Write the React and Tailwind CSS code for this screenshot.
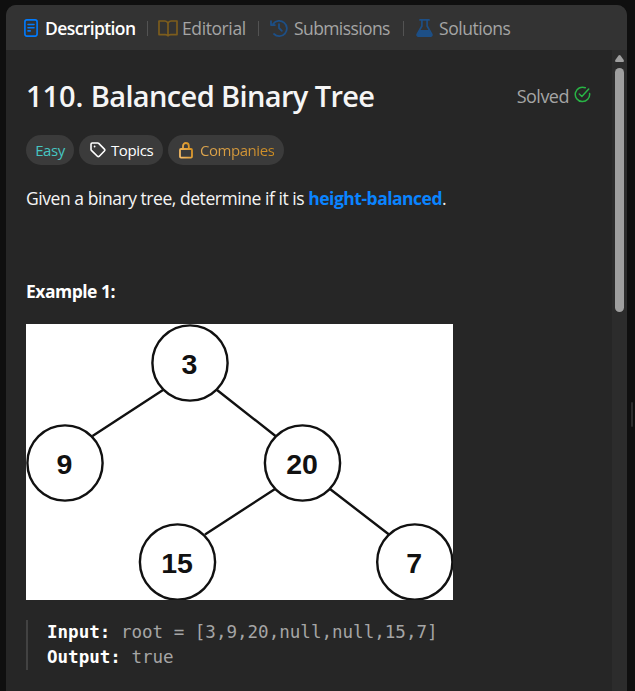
import React from "react";

const DocIcon = () => (
  <svg width="14" height="18" viewBox="0 0 14 18" fill="none" stroke="#007bff" strokeWidth="1.6" strokeLinecap="round">
    <rect x="0.9" y="0.9" width="12.2" height="16.2" rx="2" />
    <path d="M4 5.5h6M4 8.7h6M4 11.9h2.2" />
  </svg>
);

const BookIcon = () => (
  <svg width="20" height="17" viewBox="0 0 20 17" fill="none" stroke="#7d5d1d" strokeWidth="1.7" strokeLinejoin="round">
    <path d="M10 3.2C9.4 1.7 8.4 1 7 1H1v13.6h6.4c1.2 0 2 .4 2.6 1.3.6-.9 1.4-1.3 2.6-1.3H19V1h-6c-1.4 0-2.4.7-3 2.2zM10 3.2v12.3" />
  </svg>
);

const HistoryIcon = () => (
  <svg width="18" height="18" viewBox="0 0 18 18" fill="none" stroke="#1d4f86" strokeWidth="1.8" strokeLinecap="round" strokeLinejoin="round">
    <path d="M3.2 4.9A7.600 7.600 0 1 1 4 15M1 2.200v3.900h3.900M9 5.200V9l2.800 2.800" />
  </svg>
);

const FlaskIcon = () => (
  <svg width="17" height="18" viewBox="0 0 17 18" fill="none" stroke="#1d4f86" strokeWidth="1.7" strokeLinejoin="round">
    <path d="M4 .9h9M5.9 1v6L1.300 15.200c-.5 1 .1 1.900 1.200 1.900h12c1.100 0 1.700-.9 1.200-1.900L11.100 7V1" strokeLinecap="round" />
    <path d="M4 11h9l2.700 5-.8 1H2l-.8-1z" fill="#1d4f86" stroke="none" />
  </svg>
);

const CheckIcon = () => (
  <svg width="17" height="17" viewBox="0 0 17 17" fill="none" stroke="#28b445" strokeWidth="1.5" strokeLinecap="round" strokeLinejoin="round">
    <path d="M11.300 1.800A7.200 7.200 0 1 0 15.600 7.500M5.300 8l2.600 2.500L14.700 3" />
  </svg>
);

const TagIcon = () => (
  <svg width="16" height="16" viewBox="0 0 16 16" fill="none" stroke="#fff" strokeWidth="1.6" strokeLinejoin="round">
    <path d="M1 2.200C1 1.500 1.500 1 2.200 1h5.500c.4 0 .7.100 1 .4l5.700 5.700c.6.6.6 1.300 0 1.900L9.300 14.200c-.6.600-1.300.600-1.900 0L1.400 8.400c-.3-.3-.4-.6-.4-1z" />
    <circle cx="4.6" cy="4.5" r="0.9" fill="#fff" stroke="none" />
  </svg>
);

const LockIcon = () => (
  <svg width="14" height="17" viewBox="0 0 14 17" fill="none" stroke="url(#gold)" strokeWidth="1.8" strokeLinejoin="round">
    <defs>
      <linearGradient id="gold" gradientUnits="userSpaceOnUse" x1="0" y1="12" x2="14" y2="4">
        <stop stopColor="#f7bd67" />
        <stop offset="1" stopColor="#d18a16" />
      </linearGradient>
    </defs>
    <rect x="1" y="7" width="12" height="8.600" rx="1" />
    <path d="M4 7V4c0-1.900 1.200-3 2.900-3S9.800 2.100 9.800 4v3" />
  </svg>
);

const Divider = () => <div className="h-[15px] w-px shrink-0 bg-[#535353]" />;

const nodes = [
  { x: 164, y: 39, v: "3" },
  { x: 39, y: 139, v: "9" },
  { x: 276.5, y: 139, v: "20" },
  { x: 151.5, y: 238, v: "15" },
  { x: 388.8, y: 238, v: "7" },
];

const Tree = () => (
  <svg className="mt-[18px] block shrink-0 bg-white" width="427" height="276" viewBox="0 0 427 276">
    <g stroke="#111" strokeWidth="2.4" fill="none">
      <path d="M137 66L66.500 112M191 66l58.500 46M249 165l-70 45.500M304 165l59 45.500" />
      {nodes.map((n) => (
        <circle key={n.v} cx={n.x} cy={n.y} r="37.6" />
      ))}
    </g>
    {nodes.map((n) => (
      <text key={n.v} x={n.x - 0.5} y={n.y + 10.5} textAnchor="middle" fill="#111" fontSize="28.5" fontWeight="700" fontFamily="'Liberation Sans', sans-serif">
        {n.v}
      </text>
    ))}
  </svg>
);

export default function App() {
  return (
    <div className="flex h-[691px] w-[635px] overflow-hidden bg-[#0f0f0f] pl-[6px] pt-[5px] font-['Open_Sans',sans-serif] whitespace-nowrap">
      <div className="flex w-[621px] flex-col overflow-hidden rounded-t-[10px] bg-[#262626]">
        <header className="flex h-[45px] shrink-0 items-center bg-[#333333] pl-[18px] pt-[1px] text-[17.5px] text-[#a5a5a5]">
          <DocIcon />
          <span className="ml-[7px] w-[102px] font-semibold tracking-[-0.6px] text-white">Description</span>
          <Divider />
          <span className="ml-[10px]"><BookIcon /></span>
          <span className="ml-[4px] w-[76px] tracking-[-0.4px]">Editorial</span>
          <Divider />
          <span className="ml-[11px]"><HistoryIcon /></span>
          <span className="ml-[6px] w-[109px] tracking-[-0.6px]">Submissions</span>
          <Divider />
          <span className="ml-[12px]"><FlaskIcon /></span>
          <span className="ml-[6px] tracking-[-0.45px]">Solutions</span>
        </header>

        <div className="flex min-h-0 flex-1">
          <main className="flex w-[606px] shrink-0 flex-col pl-[20px] pt-[24px]">
            <div className="flex h-[44px] w-[565px] items-center justify-between">
              <h1 className="text-[29px] font-semibold leading-[44px] tracking-[-0.63px] text-[#f5f5f5]">
                <span className="tracking-[-0.1px]">110. </span>Balanced Binary Tree
              </h1>
              <div className="flex items-center gap-[5px] text-[18px] tracking-[-0.5px] text-[#a5a5a5]">
                <span>Solved</span>
                <span className="mb-[3px]"><CheckIcon /></span>
              </div>
            </div>

            <div className="mt-[17px] flex h-[30px] shrink-0 gap-[5px] text-[15px] leading-[30px] text-white">
              <div className="w-[48px] rounded-full bg-[#3b3b3b] text-center tracking-[-0.4px] text-[#46c6c2]">Easy</div>
              <div className="flex w-[84px] items-center gap-[5px] rounded-full bg-[#3b3b3b] pl-[11px]">
                <TagIcon />
                <span className="tracking-[-0.4px]">Topics</span>
              </div>
              <div className="flex w-[116px] items-center gap-[7px] rounded-full bg-[#3b3b3b] pl-[11px]">
                <LockIcon />
                <span className="bg-linear-to-r from-[#dfa750] to-[#cc8b20] bg-clip-text tracking-[-0.45px] text-transparent">Companies</span>
              </div>
            </div>

            <p className="mt-[18px] h-[30px] text-[17.5px] leading-[30px] tracking-[-0.45px] text-[#f5f5f5]">
              Given a binary tree, determine if it is <strong className="font-bold tracking-[-0.5px] text-[#0a84ff]">height-balanced</strong>.
            </p>
            <p className="mt-[63px] h-[30px] text-[17.5px] font-bold leading-[30px] tracking-[-0.5px] text-white">Example 1:</p>

            <Tree />

            <pre className="mt-[20px] h-[50px] border-l-2 border-[#424242] pl-[19px] font-['DejaVu_Sans_Mono',monospace] text-[17.55px] leading-[25px] text-[#a5a5a5]">
              <strong className="text-white">Input:</strong>{" root = [3,9,20,null,null,15,7]\n"}
              <strong className="text-white">Output:</strong>{" true"}
            </pre>
          </main>

          <div className="flex w-[15px] shrink-0 flex-col items-center bg-[#2c2c2c] pt-[5px]">
            <svg width="9" height="7" viewBox="0 0 9 7" fill="#9f9f9f">
              <path d="M3.500.6Q4.500-.4 5.500.6L8.700 4.900Q9.400 7 8 7H1Q-.4 7 .3 4.900z" />
            </svg>
            <div className="mt-[6px] h-[244px] w-[9px] rounded-full bg-[#9f9f9f]" />
          </div>
        </div>
      </div>
      <div className="ml-[4px] mt-[397px] h-[25px] w-[2px] rounded-full bg-[#2d2d2d]" />
    </div>
  );
}
